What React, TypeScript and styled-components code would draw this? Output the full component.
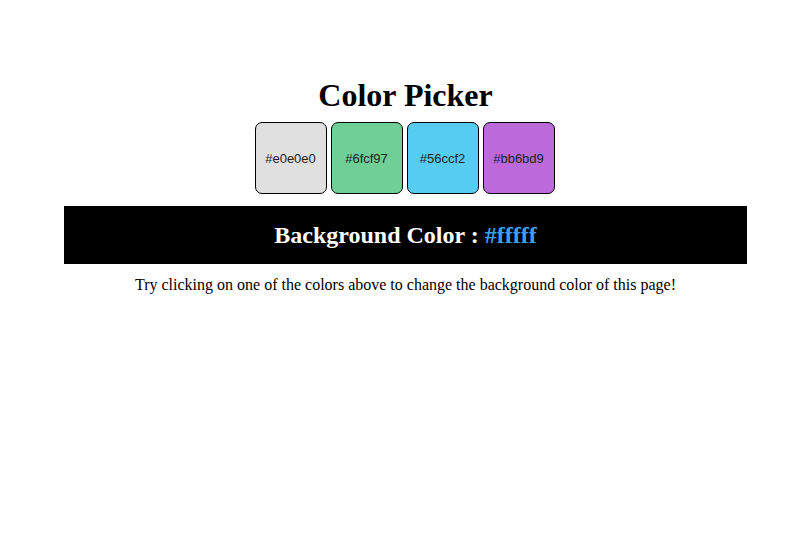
import styled, { createGlobalStyle } from 'styled-components';

const colors = ['#e0e0e0', '#6fcf97', '#56ccf2', '#bb6bd9'];

const GlobalStyle = createGlobalStyle`
  html, body {
    margin: 0;
    padding: 0;
    background: #ffffff;
    font-family: "Liberation Serif", "Times New Roman", serif;
  }
`;

const App = () => {
  return (
    <>
      <GlobalStyle />
      <Page>
        <Title>Color Picker</Title>
        <SwatchRow>
          {colors.map((c) => (
            <Swatch key={c} $color={c}>
              {c}
            </Swatch>
          ))}
        </SwatchRow>
        <Banner>
          Background Color : <Hex>#fffff</Hex>
        </Banner>
        <Hint>
          Try clicking on one of the colors above to change the background color of this page!
        </Hint>
      </Page>
    </>
  );
};

const Page = styled.div`
  width: 683px;
  margin-left: 64px;
  padding-top: 77px;
  display: flex;
  flex-direction: column;
  align-items: center;
`;

const Title = styled.h1`
  margin: 0;
  font-size: 32px;
  font-weight: 700;
  line-height: 37px;
  color: #000;
`;

const SwatchRow = styled.div`
  display: flex;
  gap: 4px;
  margin: 8px 2px 0 0;
`;

const Swatch = styled.div<{ $color: string }>`
  width: 72px;
  height: 72px;
  box-sizing: border-box;
  border: 1px solid #000;
  border-radius: 7px;
  background: ${(p) => p.$color};
  display: flex;
  align-items: center;
  justify-content: center;
  font-family: "Liberation Sans", Arial, sans-serif;
  font-size: 13px;
  color: #222;
  cursor: pointer;
`;

const Banner = styled.div`
  align-self: stretch;
  margin-top: 12px;
  height: 58px;
  background: #000;
  color: #fff;
  display: flex;
  align-items: center;
  justify-content: center;
  font-size: 24px;
  font-weight: 700;
`;

const Hex = styled.span`
  color: #3a9ff2;
  margin-left: 6px;
`;

const Hint = styled.p`
  margin: 12px 0 0;
  font-size: 16px;
  line-height: 18px;
  color: #000;
`;

export default App;
